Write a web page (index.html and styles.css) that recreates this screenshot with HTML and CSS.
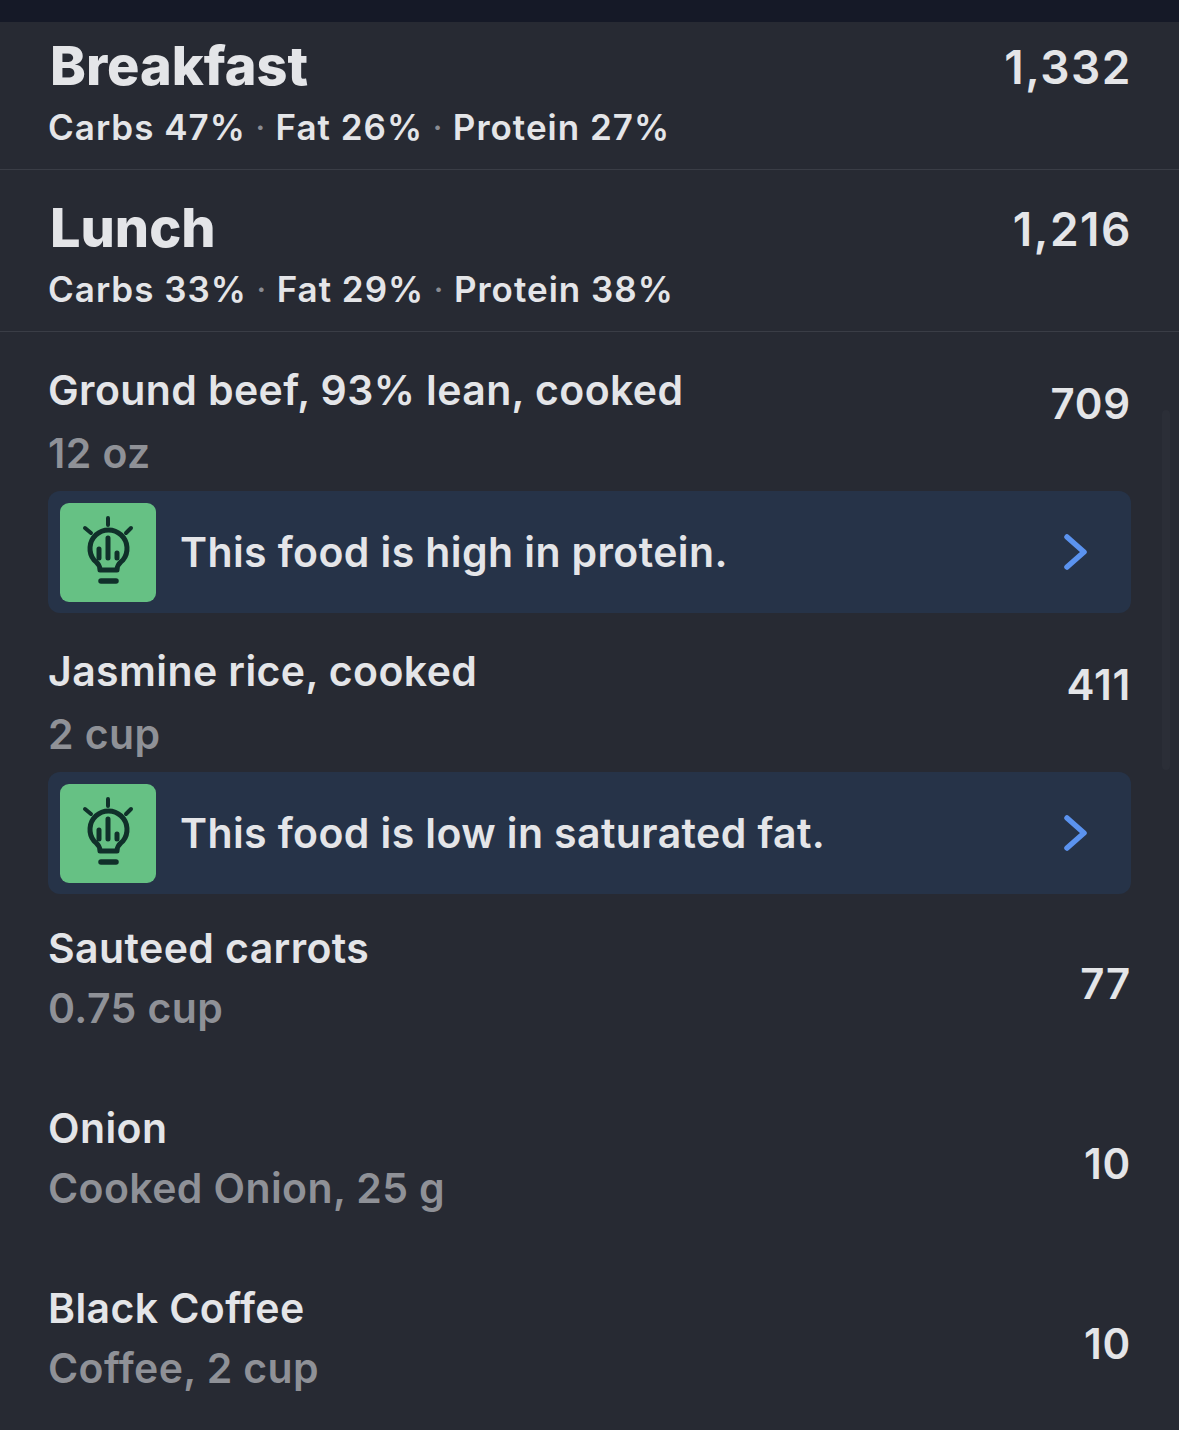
FILE: index.html
```html
<!DOCTYPE html>
<html lang="en">
<head>
    <meta charset="UTF-8">
    <meta name="viewport" content="width=device-width, initial-scale=1.0">
    <title>Food log</title>
    <link rel="stylesheet" href="styles.css">
</head>
<body>
    <svg class="defs" width="0" height="0">
        <symbol id="bulb" viewBox="0 0 96 99">
            <g fill="none" stroke="#10302a" stroke-linecap="round" stroke-linejoin="round">
                <path stroke-width="4" d="M48 15V22M25 25L31 30M71 25L66 30"/>
                <path stroke-width="5" d="M40 67C40 61 37 60 34 57A18.500 18.500 0 1 1 63 57C60 60 57 61 57 67Z"/>
                <path stroke-width="5" d="M48 35V55M39 46V55M57 50V55"/>
                <path stroke-width="5.500" d="M41 78H56"/>
            </g>
        </symbol>
        <symbol id="chevron" viewBox="0 0 24 36">
            <path d="M3 3L20 18L3 33" fill="none" stroke="#5b93ef" stroke-width="5.500" stroke-linecap="round" stroke-linejoin="round"/>
        </symbol>
    </svg>

    <div class="topbar"></div>

    <div class="meal meal-first">
        <div class="meal-text">
            <div class="meal-name">Breakfast</div>
            <div class="macros">Carbs 47% <span class="dot">·</span> Fat 26% <span class="dot">·</span> Protein 27%</div>
        </div>
        <div class="meal-cal">1,332</div>
    </div>

    <div class="meal">
        <div class="meal-text">
            <div class="meal-name">Lunch</div>
            <div class="macros">Carbs 33% <span class="dot">·</span> Fat 29% <span class="dot">·</span> Protein 38%</div>
        </div>
        <div class="meal-cal">1,216</div>
    </div>

    <div class="food food-tall">
        <div>
            <div class="food-name">Ground beef, 93% lean, cooked</div>
            <div class="food-amount food-amount-tall">12 oz</div>
        </div>
        <div class="food-cal">709</div>
    </div>
    <div class="tip">
        <div class="tip-icon"><svg width="96" height="99"><use href="#bulb"/></svg></div>
        <div class="tip-text">This food is high in protein.</div>
        <svg class="tip-arrow" width="24" height="36"><use href="#chevron"/></svg>
    </div>

    <div class="food food-tall">
        <div>
            <div class="food-name">Jasmine rice, cooked</div>
            <div class="food-amount food-amount-tall">2 cup</div>
        </div>
        <div class="food-cal">411</div>
    </div>
    <div class="tip">
        <div class="tip-icon"><svg width="96" height="99"><use href="#bulb"/></svg></div>
        <div class="tip-text">This food is low in saturated fat.</div>
        <svg class="tip-arrow" width="24" height="36"><use href="#chevron"/></svg>
    </div>

    <div class="food food-plain">
        <div>
            <div class="food-name">Sauteed carrots</div>
            <div class="food-amount">0.75 cup</div>
        </div>
        <div class="food-cal">77</div>
    </div>
    <div class="food food-plain">
        <div>
            <div class="food-name">Onion</div>
            <div class="food-amount">Cooked Onion, 25 g</div>
        </div>
        <div class="food-cal">10</div>
    </div>
    <div class="food food-plain">
        <div>
            <div class="food-name">Black Coffee</div>
            <div class="food-amount">Coffee, 2 cup</div>
        </div>
        <div class="food-cal">10</div>
    </div>

    <div class="scrollbar"></div>
</body>
</html>
```

FILE: styles.css
```css
html, body {
    height: 100%;
}
body {
    margin: 0;
    background-color: #272a33;
    color: #e4e5e8;
    font-family: Inter, "Noto Sans", sans-serif;
    overflow: hidden;
    position: relative;
}
.defs {
    position: absolute;
}
.topbar {
    height: 22px;
    background-color: #151927;
}

.meal {
    display: flex;
    justify-content: space-between;
    height: 161px;
    padding: 0 49px 0 48px;
    border-bottom: 1px solid #3a3d46;
}
.meal-first {
    height: 147px;
}
.meal-first .meal-text {
    padding-top: 13px;
}
.meal-first .meal-cal {
    padding-top: 17px;
}
.meal-text {
    padding-top: 27px;
}
.meal-name {
    font-size: 54px;
    font-weight: 800;
    line-height: 62px;
    padding-left: 2px;
}
.macros {
    font-size: 35px;
    font-weight: 600;
    line-height: 42px;
    margin-top: 9px;
    letter-spacing: 1px;
}
.dot {
    color: #8a8c93;
    font-weight: 400;
    margin: 0 -0.5px;
}
.meal-cal {
    font-size: 46px;
    font-weight: 600;
    line-height: 56px;
    padding-top: 31px;
    margin-right: -2px;
    letter-spacing: 1.5px;
}

.food {
    display: flex;
    justify-content: space-between;
    align-items: flex-start;
    padding: 0 49px 0 48px;
}
.food-tall {
    height: 125px;
    padding-top: 34px;
}
.food-tall .food-cal {
    margin-top: 13px;
}
.food-plain {
    height: 150px;
    padding-top: 30px;
}
.food-plain .food-cal {
    margin-top: 35px;
}
.food-name {
    font-size: 41px;
    font-weight: 600;
    line-height: 48px;
    letter-spacing: 0.4px;
}
.food-amount {
    font-size: 41px;
    font-weight: 600;
    line-height: 48px;
    margin-top: 12px;
    color: #8f9197;
    letter-spacing: 0.4px;
}
.food-amount-tall {
    margin-top: 15px;
}
.food-cal {
    font-size: 42px;
    font-weight: 600;
    line-height: 50px;
    letter-spacing: 0.8px;
    margin-right: -1px;
}

.tip {
    display: flex;
    align-items: center;
    height: 122px;
    margin: 0 48px;
    padding-left: 12px;
    background-color: #263348;
    border-radius: 12px;
}
.tip-icon {
    display: flex;
    width: 96px;
    height: 99px;
    background-color: #66c184;
    border-radius: 9px;
}
.tip-text {
    flex: 1;
    font-size: 41px;
    font-weight: 600;
    line-height: 50px;
    margin-left: 24px;
    letter-spacing: 0.4px;
}
.tip-arrow {
    margin-right: 43px;
}

.scrollbar {
    position: absolute;
    top: 410px;
    right: 9px;
    width: 8px;
    height: 360px;
    border-radius: 4px;
    background-color: #2b2e37;
}
```
